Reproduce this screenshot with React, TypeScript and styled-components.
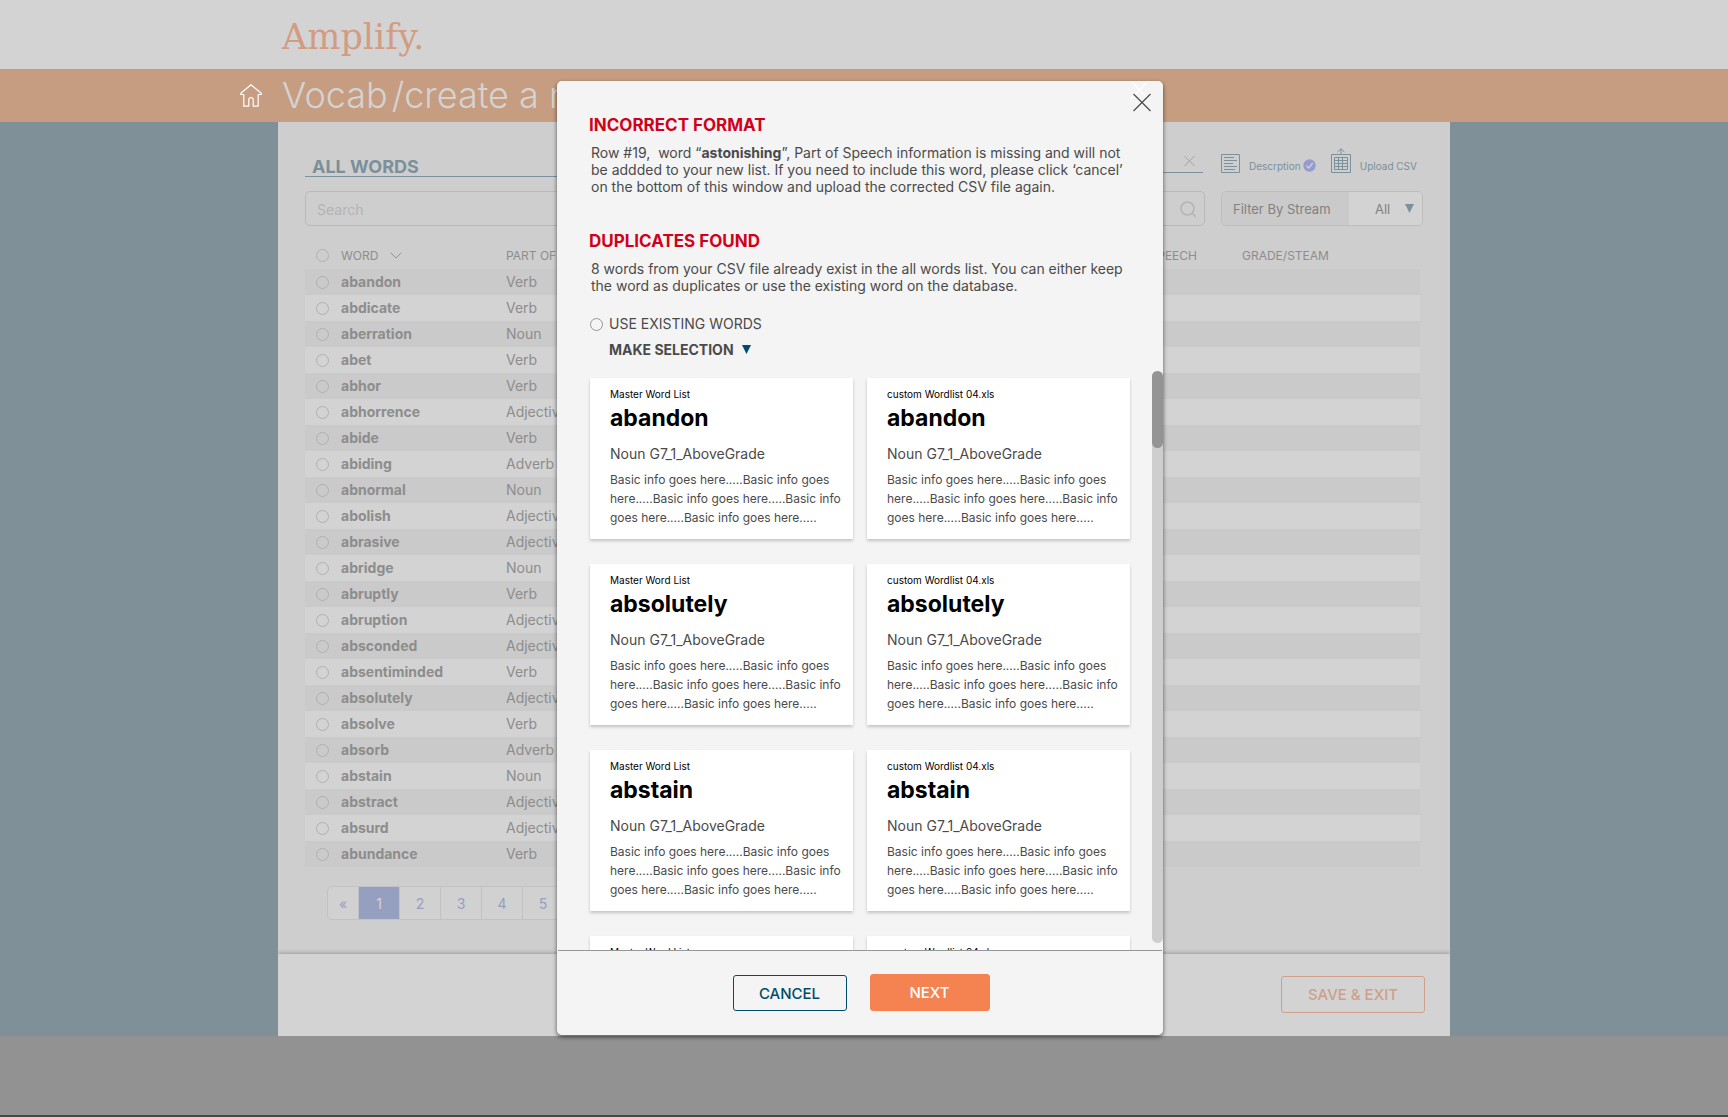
import React from "react";
import styled, { createGlobalStyle } from "styled-components";

const GlobalStyle = createGlobalStyle`
  *, *::before, *::after { box-sizing: border-box; }
  body {
    margin: 0;
    background: #929292;
    font-family: Inter, "Liberation Sans", sans-serif;
    color: #4a4a4a;
  }
  h1, h2, p { margin: 0; }
  button, input, select { font-family: inherit; }
`;

const Page = styled.div`
  position: relative;
  min-height: 100vh;
  display: flex;
  flex-direction: column;
  overflow-x: hidden;
  border-bottom: 2px solid #484848;
`;

const Column = styled.div`
  width: 100%;
  max-width: 1172px;
  margin: 0 auto;
`;

const TopBar = styled.header`
  height: 69px;
  background: #d3d3d3;
`;

const Logo = styled.a`
  display: block;
  padding: 17px 0 0 4px;
  font-family: "DejaVu Serif", serif;
  font-size: 35px;
  line-height: 40px;
  color: #d39c82;
  text-decoration: none;
`;

const Banner = styled.div`
  height: 53px;
  background: #c69d81;
`;

const BannerRow = styled(Column)`
  display: flex;
  align-items: center;
  height: 100%;
`;

const HomeLink = styled.a`
  display: flex;
  width: 22px;
  margin: 0 20px 0 -38px;
`;

const Title = styled.h1`
  display: flex;
  gap: 4px;
  font-size: 36px;
  line-height: 53px;
  font-weight: 300;
  color: #d5d3d1;
  white-space: nowrap;
`;

const Body = styled.main`
  background: #7f9098;
`;

const Sheet = styled(Column)`
  background: #cecece;
`;

const Lists = styled.div`
  display: grid;
  grid-template-columns: minmax(0, 1fr) minmax(0, 1fr);
  gap: 27px;
  height: 832px;
  padding: 30px 27px 0;
`;

const ListPane = styled.section`
  display: flex;
  flex-direction: column;
`;

const PaneTitle = styled.h2`
  height: 25px;
  padding-left: 7px;
  border-bottom: 1px solid #7b929c;
  font-size: 18px;
  line-height: 30px;
  font-weight: 700;
  color: #7b909a;
`;

const NameRow = styled.div`
  display: flex;
  align-items: flex-start;
  gap: 18px;
  height: 25px;
`;

const NameField = styled.div`
  display: flex;
  flex: 1;
  align-items: flex-end;
  height: 21px;
  padding-right: 8px;
  border-bottom: 1px solid #7b929c;
`;

const BareInput = styled.input`
  flex: 1;
  min-width: 0;
  height: 100%;
  padding: 0;
  border: 0;
  outline: 0;
  background: none;
  font-size: 14px;
  color: #8c8c8c;
  &::placeholder { color: #b4b4b4; opacity: 1; }
`;

const IconButton = styled.button`
  display: flex;
  padding: 0;
  border: 0;
  background: none;
`;

const Tools = styled.div`
  display: flex;
  align-items: flex-end;
  gap: 15px;
  width: 202px;
  height: 21px;
`;

const Tool = styled.button`
  display: flex;
  align-items: flex-end;
  gap: 9px;
  height: 25px;
  padding: 0;
  border: 0;
  background: none;
  font-size: 10px;
  line-height: 14px;
  font-weight: 400;
  color: #7b909a;
  white-space: nowrap;
`;

const ToolLabel = styled.span`
  display: flex;
  align-items: flex-start;
  gap: 2px;
`;

const FilterRow = styled.div`
  display: flex;
  gap: 16px;
  margin-top: 14px;
`;

const SearchBox = styled.label`
  display: flex;
  flex: 1;
  align-items: center;
  height: 35px;
  padding: 2px 8px 0 11px;
  border: 1px solid #b9b9b9;
  border-radius: 5px;
`;

const StreamFilter = styled.label`
  display: flex;
  align-items: stretch;
  width: 202px;
  height: 35px;
  border: 1px solid #bdbdbd;
  border-radius: 5px;
  overflow: hidden;
  font-size: 13px;
  line-height: 34px;
  color: #818181;
`;

const StreamLabel = styled.span`
  flex: 1;
  padding-left: 11px;
  background: #cacaca;
`;

const StreamValue = styled.span`
  display: flex;
  align-items: center;
  width: 73px;
  padding-right: 8px;
  background: #d3d3d3;
`;

const StreamSelect = styled.select`
  flex: 1;
  height: 100%;
  padding: 0 0 0 26px;
  border: 0;
  appearance: none;
  background: none;
  font-size: 13px;
  color: #818181;
`;

const TableWrap = styled.div<{ $inset?: number }>`
  margin-top: 16px;
  padding-right: ${(p) => p.$inset || 0}px;
`;

const WordTable = styled.table`
  width: 100%;
  border-collapse: collapse;
  table-layout: fixed;
  font-size: 14px;
  line-height: 26px;
  color: #8d8d8d;
  th, td { padding: 0; text-align: left; font-weight: 400; white-space: nowrap; }
  thead th { height: 27px; font-size: 12px; line-height: 27px; color: #8d8d8d; }
  tbody tr { height: 26px; background: #d3d3d3; }
  tbody tr:nth-child(odd) { background: #cacaca; }
  tbody th { font-weight: 700; }
`;

const Col = styled.col<{ $w?: number }>`
  ${(p) => (p.$w ? `width: ${p.$w}px;` : "")}
`;

const SortHead = styled.span`
  display: flex;
  align-items: center;
  gap: 12px;
`;

const Radio = styled.input<{ $tone: string }>`
  appearance: none;
  display: block;
  flex: none;
  width: 13px;
  height: 13px;
  margin: 0;
  border: 1px solid ${(p) => p.$tone};
  border-radius: 50%;
  background: transparent;
`;

const RadioCell = styled.td`
  && { padding-left: 11px; }
`;

const Pager = styled.nav`
  display: flex;
  align-self: flex-start;
  margin: 19px 0 0 22px;
  border: 1px solid #c2c2c2;
  border-radius: 5px;
  background: #d1d1d1;
  overflow: hidden;
`;

const PageButton = styled.button<{ $active?: boolean; $w: number }>`
  width: ${(p) => p.$w}px;
  height: 32px;
  padding: 0;
  border: 0;
  border-right: 1px solid #c2c2c2;
  background: ${(p) => (p.$active ? "#959fbf" : "transparent")};
  color: ${(p) => (p.$active ? "#d3d3d3" : "#959fbf")};
  font-size: 14px;
`;

const SheetFooter = styled.footer`
  display: flex;
  justify-content: flex-end;
  height: 82px;
  padding: 22px 25px 0;
  background: #d3d3d3;
  box-shadow: 0 -1px 4px rgba(0, 0, 0, 0.25);
  clip-path: inset(-6px 0 0 0);
`;

const ActionButton = styled.button<{ $ink: string; $fill?: string; $w: number; $h: number }>`
  width: ${(p) => p.$w}px;
  height: ${(p) => p.$h}px;
  padding: 0;
  border: 1px solid ${(p) => p.$fill || p.$ink};
  border-radius: 3px;
  background: ${(p) => p.$fill || "transparent"};
  color: ${(p) => p.$ink};
  font-size: 15px;
  font-weight: 500;
`;

const Overlay = styled.div`
  position: absolute;
  inset: 81px 8px 0 0;
  display: flex;
  justify-content: center;
  align-items: flex-start;
`;

const Dialog = styled.div`
  position: relative;
  display: flex;
  flex-direction: column;
  width: 606px;
  height: 954px;
  border-radius: 5px;
  background: #f4f4f4;
  overflow: hidden;
`;

const Shadow = styled.div`
  border-radius: 5px;
  box-shadow: 0 2px 4px rgba(0, 0, 0, 0.6);
`;

const CloseButton = styled(IconButton)`
  position: absolute;
  top: 0;
  right: 12px;
`;

const Intro = styled.div`
  height: 290px;
  padding: 34px 32px 0;
`;

const Message = styled.section<{ $h: number }>`
  height: ${(p) => p.$h}px;
`;

const Alert = styled.h2`
  font-size: 17px;
  line-height: 21px;
  font-weight: 700;
  color: #d0021b;
`;

const Note = styled.p`
  padding: 8px 0 0 2px;
  font-size: 14px;
  line-height: 17px;
  white-space: pre-wrap;
`;

const Choice = styled.label`
  display: flex;
  align-items: center;
  gap: 6px;
  height: 20px;
  margin: 0 0 5px 1px;
  font-size: 14px;
  line-height: 20px;
`;

const MenuButton = styled.button`
  display: flex;
  align-items: center;
  gap: 8px;
  height: 20px;
  margin-left: 20px;
  padding: 0;
  border: 0;
  background: none;
  font-size: 14px;
  font-weight: 700;
  color: #4a4a4a;
`;

const Scroller = styled.div`
  display: flex;
  flex: 1;
  min-height: 0;
  justify-content: space-between;
  margin: 0 0 0 33px;
`;

const Cards = styled.div`
  display: grid;
  flex: 1;
  grid-template-columns: repeat(2, minmax(0, 1fr));
  grid-auto-rows: 161px;
  gap: 25px 14px;
  margin: 0 20px 0 -4px;
  padding: 7px 2px 0 4px;
  overflow: hidden;
`;

const Card = styled.article`
  padding: 10px 12px 0 20px;
  background: #fff;
  box-shadow: 0 2px 3px rgba(0, 0, 0, 0.2);
`;

const Source = styled.p`
  font-size: 10px;
  line-height: 13px;
  color: #000;
`;

const Word = styled.h2`
  margin-top: 3px;
  font-size: 23px;
  line-height: 28px;
  font-weight: 700;
  color: #000;
`;

const Kind = styled.p`
  margin-top: 12px;
  font-size: 14px;
  line-height: 20px;
`;

const Info = styled.p`
  margin-top: 6px;
  font-size: 12px;
  line-height: 19px;
`;

const Track = styled.div`
  width: 11px;
  height: 572px;
  border-radius: 6px;
  background: #cecece;
`;

const Thumb = styled.div`
  height: 77px;
  border-radius: 6px;
  background: #949494;
`;

const Actions = styled.div`
  display: flex;
  justify-content: center;
  align-items: flex-end;
  gap: 23px;
  height: 85px;
  margin: 0 1px;
  padding: 0 0 24px 2px;
  border-top: 1px solid #979797;
`;

const words: [string, string][] = [
  ["abandon", "Verb"], ["abdicate", "Verb"], ["aberration", "Noun"], ["abet", "Verb"],
  ["abhor", "Verb"], ["abhorrence", "Adjective"], ["abide", "Verb"], ["abiding", "Adverb"],
  ["abnormal", "Noun"], ["abolish", "Adjective"], ["abrasive", "Adjective"], ["abridge", "Noun"],
  ["abruptly", "Verb"], ["abruption", "Adjective"], ["absconded", "Adjective"],
  ["absentiminded", "Verb"], ["absolutely", "Adjective"], ["absolve", "Verb"],
  ["absorb", "Adverb"], ["abstain", "Noun"], ["abstract", "Adjective"], ["absurd", "Adjective"],
  ["abundance", "Verb"],
];

const duplicates = ["abandon", "absolutely", "abstain", "abundance"];
const sources = ["Master Word List", "custom Wordlist 04.xls"];

const Triangle = ({ color }: { color: string }) => (
  <svg width="9" height="9" viewBox="0 0 9 9" aria-hidden="true">
    <path d="M0 0h9L4.500 9z" fill={color} />
  </svg>
);

const HomeIcon = () => (
  <svg width="22" height="23" viewBox="0 0 22 23" fill="none" stroke="#fff" strokeWidth="1.200" strokeLinejoin="round" aria-hidden="true">
    <path d="M11 .8.8 9.200v1.300h3v11.700h5v-6.500q0-2 2.200-2t2.200 2v6.500h5V10.500h3V9.200z" />
  </svg>
);

const LinesIcon = () => (
  <svg width="19" height="19" viewBox="0 0 19 19" fill="none" stroke="#7b929c" aria-hidden="true">
    <path d="M.5.500h18v18H.500zM3 3.500h10M3 6.500h13M3 9.500h9M3 12.500h13M3 15.500h11" />
  </svg>
);

const UploadIcon = () => (
  <svg width="20" height="25" viewBox="0 0 20 25" fill="none" stroke="#7b929c" aria-hidden="true">
    <path d="M.5 6.500h19v18H.500zM3.500 9.500h13v12h-13zM7.500 9.500v12M11.500 9.500v12M3.500 12.500h13M3.500 15.500h13M3.500 18.500h13M10 6.500V1M6.500 4 10 .700 13.500 4" />
  </svg>
);

const CheckIcon = () => (
  <svg width="13" height="13" viewBox="0 0 13 13" aria-hidden="true">
    <circle cx="6.500" cy="6.500" r="6.200" fill="#959bcf" />
    <path d="m3.500 6.800 2.200 2.200 4-5" fill="none" stroke="#d3d3d3" strokeWidth="1.300" />
  </svg>
);

export default function App() {
  return (
    <Page>
      <GlobalStyle />
      <TopBar>
        <Column><Logo href="#">Amplify.</Logo></Column>
      </TopBar>
      <Banner>
        <BannerRow>
          <HomeLink href="#" aria-label="Home"><HomeIcon /></HomeLink>
          <Title><span>Vocab</span><span>/create a new list</span></Title>
        </BannerRow>
      </Banner>
      <Body>
        <Sheet>
          <Lists>
            <ListPane>
              <PaneTitle>ALL WORDS</PaneTitle>
              <FilterRow>
                <SearchBox>
                  <BareInput type="search" placeholder="Search" aria-label="Search all words" />
                </SearchBox>
              </FilterRow>
              <TableWrap>
                <WordTable>
                  <colgroup><Col $w={36} /><Col $w={165} /><Col /></colgroup>
                  <thead>
                    <tr>
                      <RadioCell><Radio type="radio" $tone="#b0b0b0" aria-label="Select all words" /></RadioCell>
                      <th>
                        <SortHead>
                          WORD
                          <svg width="12" height="7" viewBox="0 0 12 7" fill="none" stroke="#929292" aria-hidden="true"><path d="m.7.700 5.300 5.300L11.300.700" /></svg>
                        </SortHead>
                      </th>
                      <th>PART OF SPEECH</th>
                    </tr>
                  </thead>
                  <tbody>
                    {words.map(([word, part]) => (
                      <tr key={word}>
                        <RadioCell><Radio type="radio" $tone="#b0b0b0" aria-label={word} /></RadioCell>
                        <th>{word}</th>
                        <td>{part}</td>
                      </tr>
                    ))}
                  </tbody>
                </WordTable>
              </TableWrap>
              <Pager aria-label="Pages">
                <PageButton $w={31}>«</PageButton>
                {[1, 2, 3, 4, 5].map((n) => (
                  <PageButton key={n} $w={41} $active={n === 1}>{n}</PageButton>
                ))}
              </Pager>
            </ListPane>
            <ListPane>
              <NameRow>
                <NameField>
                  <BareInput aria-label="List name" />
                  <IconButton aria-label="Clear name">
                    <svg width="11" height="21" viewBox="0 0 11 21" stroke="#a3a3a3" aria-hidden="true"><path d="m.5 5 10 10M10.500 5l-10 10" /></svg>
                  </IconButton>
                </NameField>
                <Tools>
                  <Tool><LinesIcon /><ToolLabel>Descrption<CheckIcon /></ToolLabel></Tool>
                  <Tool><UploadIcon /><ToolLabel>Upload CSV</ToolLabel></Tool>
                </Tools>
              </NameRow>
              <FilterRow>
                <SearchBox>
                  <BareInput type="search" aria-label="Search list" />
                  <svg width="16" height="17" viewBox="0 0 16 17" fill="none" stroke="#b4b4b4" strokeWidth="1.500" aria-hidden="true"><circle cx="7.500" cy="7.500" r="6.500" /><path d="m12 12 4 4" /></svg>
                </SearchBox>
                <StreamFilter>
                  <StreamLabel>Filter By Stream</StreamLabel>
                  <StreamValue>
                    <StreamSelect><option>All</option></StreamSelect>
                    <Triangle color="#7b929c" />
                  </StreamValue>
                </StreamFilter>
              </FilterRow>
              <TableWrap $inset={3}>
                <WordTable>
                  <colgroup><Col /><Col $w={146} /><Col $w={178} /></colgroup>
                  <thead>
                    <tr><th>WORD</th><th>PART OF SPEECH</th><th>GRADE/STEAM</th></tr>
                  </thead>
                  <tbody>
                    {words.map(([word]) => (
                      <tr key={word}><td /><td /><td /></tr>
                    ))}
                  </tbody>
                </WordTable>
              </TableWrap>
            </ListPane>
          </Lists>
          <SheetFooter>
            <ActionButton $ink="#cf9f8a" $w={144} $h={37}>SAVE &amp; EXIT</ActionButton>
          </SheetFooter>
        </Sheet>
      </Body>
      <Overlay>
        <Shadow>
          <Dialog role="dialog" aria-label="Import problems">
            <CloseButton aria-label="Close">
              <svg width="24" height="31" viewBox="0 0 24 31" fill="none" aria-hidden="true">
                <path d="m4 0 17 18M21 0 4 18" stroke="#fff" strokeWidth="1.200" />
                <path d="m6.500 13 17 17M23.500 13l-17 17" stroke="#4a4a4a" strokeWidth="1.200" />
              </svg>
            </CloseButton>
            <Intro>
              <Message $h={116}>
                <Alert>INCORRECT FORMAT</Alert>
                <Note>Row #19,  word “<strong>astonishing</strong>”, Part of Speech information is missing and will not be addded to your new list. If you need to include this word, please click ‘cancel’ on the bottom of this window and upload the corrected CSV file again.</Note>
              </Message>
              <Message $h={83}>
                <Alert>DUPLICATES FOUND</Alert>
                <Note>8 words from your CSV file already exist in the all words list. You can either keep the word as duplicates or use the existing word on the database.</Note>
              </Message>
              <Choice>
                <Radio type="radio" $tone="#979797" />
                USE EXISTING WORDS
              </Choice>
              <MenuButton>MAKE SELECTION<Triangle color="#004b6b" /></MenuButton>
            </Intro>
            <Scroller>
              <Cards>
                {duplicates.flatMap((word) =>
                  sources.map((source) => (
                    <Card key={word + source}>
                      <Source>{source}</Source>
                      <Word>{word}</Word>
                      <Kind>Noun G7_1_AboveGrade</Kind>
                      <Info>Basic info goes here.....Basic info goes here.....Basic info goes here.....Basic info goes here.....Basic info goes here.....</Info>
                    </Card>
                  ))
                )}
              </Cards>
              <Track><Thumb /></Track>
            </Scroller>
            <Actions>
              <ActionButton $ink="#004b6b" $w={114} $h={36}>CANCEL</ActionButton>
              <ActionButton $ink="#fff" $fill="#f58352" $w={120} $h={37}>NEXT</ActionButton>
            </Actions>
          </Dialog>
        </Shadow>
      </Overlay>
    </Page>
  );
}
